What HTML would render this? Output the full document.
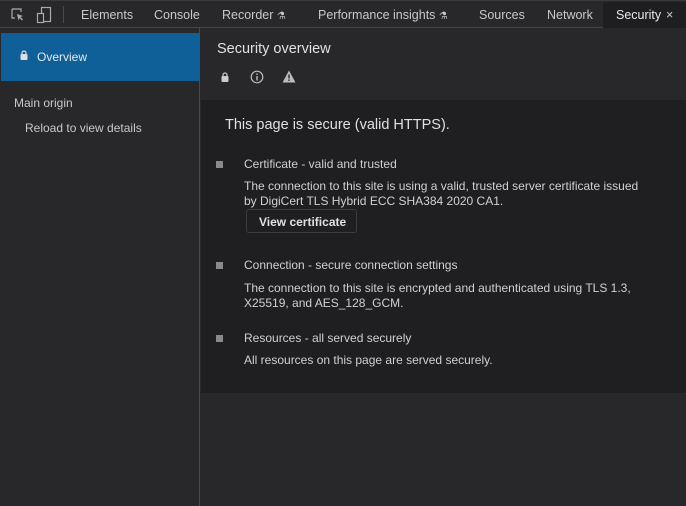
<!DOCTYPE html>
<html><head><style>
*{margin:0;padding:0;box-sizing:border-box}
body{width:686px;height:506px;background:#28282b;font-family:"Liberation Sans",sans-serif;color:#d0d0d0;position:relative;overflow:hidden;font-size:12px}
.tabs{position:absolute;left:0;top:0;width:686px;height:28px;background:#28282b;border-bottom:1px solid #454548;border-top:1px solid #3a3a3d}
.tab{position:absolute;top:7px;font-size:12.5px;color:#c8c8c8}
.sec{position:absolute;left:603px;top:1px;width:83px;height:26px;background:#1e1e21}
.side{position:absolute;left:0;top:28px;width:200px;height:478px;border-right:1px solid #474a4d}
.sel{position:absolute;left:1px;top:5px;width:199px;height:48px;background:#0f5f98}
.dark{position:absolute;left:201px;top:100px;width:485px;height:293px;background:#1f1f22}
.t{position:absolute;white-space:nowrap}
.sq{position:absolute;width:7px;height:7px;background:#8a8a8a}
</style></head><body>
<div class="tabs">
<svg style="position:absolute;left:10px;top:6px" width="16" height="16" viewBox="0 0 16 16"><path d="M2 2h9v3M2 2v9h3" fill="none" stroke="#aaa" stroke-width="1.2"/><path d="M7 7l6 2-2.5 1 2.5 2.5-1 1-2.5-2.5-1 2.5z" fill="#aaa"/></svg>
<svg style="position:absolute;left:36px;top:5px" width="16" height="18" viewBox="0 0 16 18"><rect x="5.5" y="1.5" width="9" height="14" fill="none" stroke="#aaa" stroke-width="1.2"/><rect x="1.5" y="7.5" width="6" height="9" fill="#28282b" stroke="#aaa" stroke-width="1.2"/></svg>
<div style="position:absolute;left:63px;top:5px;width:1px;height:17px;background:#4a4a4d"></div>
<div class="tab" style="left:81px">Elements</div>
<div class="tab" style="left:154px">Console</div>
<div class="tab" style="left:222px">Recorder <span style="font-size:10px">⚗</span></div>
<div class="tab" style="left:318px">Performance insights <span style="font-size:10px">⚗</span></div>
<div class="tab" style="left:479px">Sources</div>
<div class="tab" style="left:547px">Network</div>
<div class="sec"></div>
<div class="tab" style="left:616px;color:#e8e8e8">Security</div>
<div class="tab" style="left:666px;color:#ccc">×</div>
</div>
<div class="side">
<div class="sel"></div>
<svg style="position:absolute;left:20px;top:22px" width="8" height="10" viewBox="0 0 8 10"><path d="M2 4V3a2 2 0 0 1 4 0v1" fill="none" stroke="#ddd" stroke-width="1.2"/><rect x="0.5" y="4" width="7" height="6" rx="1" fill="#ddd"/></svg>
<div class="t" style="left:37px;top:22px;color:#e8e8e8">Overview</div>
<div class="t" style="left:14px;top:68px;color:#c8c8c8">Main origin</div>
<div class="t" style="left:25px;top:93px;color:#c8c8c8">Reload to view details</div>
</div>
<div class="t" style="left:217px;top:41px;font-size:14.5px;color:#e0e0e0">Security overview</div>
<svg style="position:absolute;left:221px;top:72px" width="8" height="10" viewBox="0 0 8 10"><path d="M2 4V3a2 2 0 0 1 4 0v1" fill="none" stroke="#ccc" stroke-width="1.2"/><rect x="0.5" y="4" width="7" height="6" rx="1" fill="#ccc"/></svg>
<svg style="position:absolute;left:250px;top:70px" width="14" height="14" viewBox="0 0 14 14"><circle cx="7" cy="7" r="5.8" fill="none" stroke="#bbb" stroke-width="1.2"/><rect x="6.3" y="6" width="1.4" height="4.5" fill="#bbb"/><rect x="6.3" y="3.5" width="1.4" height="1.4" fill="#bbb"/></svg>
<svg style="position:absolute;left:282px;top:70px" width="14" height="13" viewBox="0 0 14 13"><path d="M7 0.5L13.5 12.5H0.5z" fill="#bbb"/><rect x="6.3" y="4.5" width="1.4" height="4" fill="#28282b"/><rect x="6.3" y="9.5" width="1.4" height="1.4" fill="#28282b"/></svg>
<div class="dark"></div>
<div class="t" style="left:225px;top:117px;font-size:14.5px;color:#e0e0e0">This page is secure (valid HTTPS).</div>
<div class="sq" style="left:216px;top:161px"></div>
<div class="t" style="left:244px;top:157px">Certificate - valid and trusted</div>
<div class="t" style="left:244px;top:179px;line-height:15px">The connection to this site is using a valid, trusted server certificate issued<br>by DigiCert TLS Hybrid ECC SHA384 2020 CA1.</div>
<div style="position:absolute;left:246px;top:209px;width:111px;height:24px;border:1px solid #3c3c3f;border-radius:3px;background:#1f1f22"></div>
<div class="t" style="left:259px;top:215px;font-weight:bold;color:#e0e0e0">View certificate</div>
<div class="sq" style="left:216px;top:262px"></div>
<div class="t" style="left:244px;top:258px">Connection - secure connection settings</div>
<div class="t" style="left:244px;top:281px;line-height:15px">The connection to this site is encrypted and authenticated using TLS 1.3,<br>X25519, and AES_128_GCM.</div>
<div class="sq" style="left:216px;top:335px"></div>
<div class="t" style="left:244px;top:331px">Resources - all served securely</div>
<div class="t" style="left:244px;top:353px">All resources on this page are served securely.</div>
</body></html>
